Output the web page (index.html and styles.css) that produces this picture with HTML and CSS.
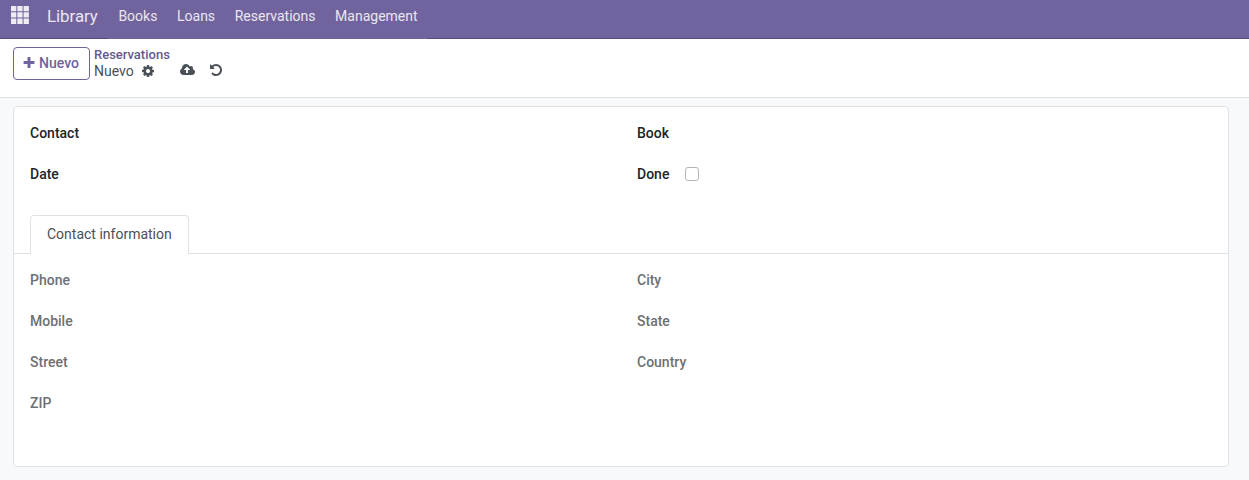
FILE: index.html
```html
<!DOCTYPE html>
<html lang="es">
<head>
<meta charset="utf-8">
<title>Library</title>
<link rel="stylesheet" href="styles.css">
</head>
<body>
<header class="navbar">
  <svg class="apps" viewBox="0 0 18 18"><path d="M0 0h5.3v5.3H0zM6.3 0h5.3v5.3H6.3zM12.6 0h5.3v5.3h-5.3zM0 6.3h5.3v5.3H0zM6.3 6.3h5.3v5.3H6.3zM12.6 6.3h5.3v5.3h-5.3zM0 12.6h5.3v5.3H0zM6.3 12.6h5.3v5.3H6.3zM12.6 12.6h5.3v5.3h-5.3z"/></svg>
  <span class="brand">Library</span>
  <nav class="menu"><a>Books</a><a>Loans</a><a>Reservations</a><a>Management</a></nav>
</header>
<section class="control">
  <button class="new"><svg class="icon" viewBox="0 0 1792 1792"><path d="M1600 736v192q0 40-28 68t-68 28h-416v416q0 40-28 68t-68 28h-192q-40 0-68-28t-28-68v-416h-416q-40 0-68-28t-28-68v-192q0-40 28-68t68-28h416v-416q0-40 28-68t68-28h192q40 0 68 28t28 68v416h416q40 0 68 28t28 68z"/></svg><span>Nuevo</span></button>
  <div class="crumbs">
    <a class="parent">Reservations</a>
    <div class="current"><span>Nuevo</span>
      <svg class="icon cog" viewBox="0 0 1792 1792"><path d="M1152 896q0-106-75-181t-181-75-181 75-75 181 75 181 181 75 181-75 75-181zm512-109v222q0 12-8 23t-20 13l-185 28q-19 54-39 91 35 50 107 138 10 12 10 25t-9 23q-27 37-99 108t-94 71q-12 0-26-9l-138-108q-44 23-91 38-16 136-29 186-7 28-36 28h-222q-14 0-24.5-8.5t-11.5-21.5l-28-184q-49-16-90-37l-141 107q-10 9-25 9-14 0-25-11-126-114-165-168-7-10-7-23 0-12 8-23 15-21 51-66.5t54-70.5q-27-50-41-99l-183-27q-13-2-21-12.5t-8-23.5v-222q0-12 8-23t19-13l186-28q14-46 39-92-40-57-107-138-10-12-10-24 0-10 9-23 26-36 98.5-107.5t94.5-71.5q13 0 26 10l138 107q44-23 91-38 16-136 29-186 7-28 36-28h222q14 0 24.5 8.5t11.5 21.5l28 184q49 16 90 37l142-107q9-9 24-9 13 0 25 10 129 119 165 170 7 8 7 22 0 12-8 23-15 21-51 66.5t-54 70.5q26 50 41 98l183 28q13 2 21 12.5t8 23.5z"/></svg>
      <svg class="icon cloud" viewBox="0 0 2048 1792"><path d="M1280 864q0-14-9-23l-352-352q-9-9-23-9t-23 9l-351 351q-10 12-10 24 0 14 9 23t23 9h224v352q0 13 9.5 22.5t22.5 9.5h192q13 0 22.5-9.5t9.5-22.5v-352h224q13 0 22.5-9.5t9.5-22.5zm640 288q0 159-112.5 271.5t-271.5 112.5h-1088q-185 0-316.5-131.5t-131.5-316.5q0-130 70-240t188-165q-2-30-2-43 0-212 150-362t362-150q156 0 285.5 87t188.5 231q71-62 166-62 106 0 181 75t75 181q0 76-41 138 130 31 213.5 135.5t83.5 238.5z"/></svg>
      <svg class="icon undo" viewBox="0 0 1792 1792"><path d="M1664 896q0 156-61 298t-164 245-245 164-298 61q-172 0-327-72.5t-264-204.5q-7-10-6.5-22.5t8.5-20.5l137-138q10-9 25-9 16 2 23 12 73 95 179 147t225 52q104 0 198.5-40.5t163.5-109.5 109.5-163.5 40.5-198.5-40.5-198.5-109.5-163.5-163.5-109.5-198.5-40.5q-98 0-188 35.5t-160 101.5l137 138q31 30 14 69-17 40-59 40h-448q-26 0-45-19t-19-45v-448q0-42 40-59 39-17 69 14l130 129q107-101 244.5-156.5t284.5-55.5q156 0 298 61t245 164 164 245 61 298z"/></svg>
    </div>
  </div>
</section>
<main class="sheet">
  <div class="grid main-fields">
    <label>Contact</label><label>Book</label>
    <label>Date</label><label>Done <input class="check" type="checkbox"></label>
  </div>
  <div class="tabs"><div class="tab">Contact information</div></div>
  <div class="grid details">
    <label>Phone</label><label>City</label>
    <label>Mobile</label><label>State</label>
    <label>Street</label><label>Country</label>
    <label>ZIP</label>
  </div>
</main>
</body>
</html>
```
FILE: styles.css
```css
* { box-sizing: border-box; }
body { margin: 0; height: 480px; overflow: hidden; background: #f8f9fa; font: 14px/21px Roboto, sans-serif; color: #495057; }
.navbar { display: flex; height: 39px; padding-left: 11px; color: #e9e6f0;
  background: linear-gradient(90deg, #5a4a7f 108px, #71639e 108px 427px, #5a4a7f 427px) 0 38px / 100% 1px no-repeat #71639e; }
.apps { width: 18px; height: 18px; margin-top: 6px; fill: #eeecf3; }
.brand { width: 71px; padding: 6px 0 0 18px; font-size: 16.8px; white-space: nowrap; }
.menu { display: flex; gap: 19.6px; padding: 6px 0 0 18.4px; }
.control { display: flex; height: 59px; padding: 8px 0 0 13px; background: #fff; border-bottom: 1px solid #dee2e6; }
.icon { width: 14px; height: 14px; fill: currentColor; flex: none; }
.new { display: flex; align-items: center; gap: 3px; width: 77px; height: 33px; padding: 0 0 0 8px; background: #fff; border: 1px solid #71639e; border-radius: 4px; font: 500 14px/21px Roboto, sans-serif; color: #71639e; }
.new .icon { margin-bottom: 1px; }
.crumbs { padding: 0 0 0 4px; }
.parent { display: block; font-size: 13px; line-height: 16px; font-weight: 500; color: #66598f; }
.current { display: flex; align-items: center; height: 16px; line-height: 16px; }
.cog { margin-left: 7px; }
.cloud { width: 16px; margin: 0 0 2px 25px; }
.undo { margin: 0 0 2px 13px; }
.sheet { width: 1216px; height: 361px; margin: 8px 0 0 13px; background: #fff; border: 1px solid #dee2e6; border-radius: 4px; }
.grid { display: grid; grid-template-columns: 607px 1fr; grid-auto-rows: 41px; padding-left: 16px; font-weight: 500; }
.grid label { display: flex; align-items: flex-start; }
.main-fields { padding-top: 16px; height: 108px; color: #212529; }
.check { appearance: none; width: 14px; height: 14px; margin: 3px 0 0 16px; border: 1px solid #b5b5b5; border-radius: 3px; background: #fff; }
.tabs { height: 39px; padding-left: 16px; border-bottom: 1px solid #dee2e6; }
.tab { width: 159px; height: 39px; padding: 8px 0 0 16px; background: #fff; border: 1px solid #dee2e6; border-bottom: 0; border-radius: 4px 4px 0 0; }
.details { padding-top: 16px; color: #6f7072; }
```
